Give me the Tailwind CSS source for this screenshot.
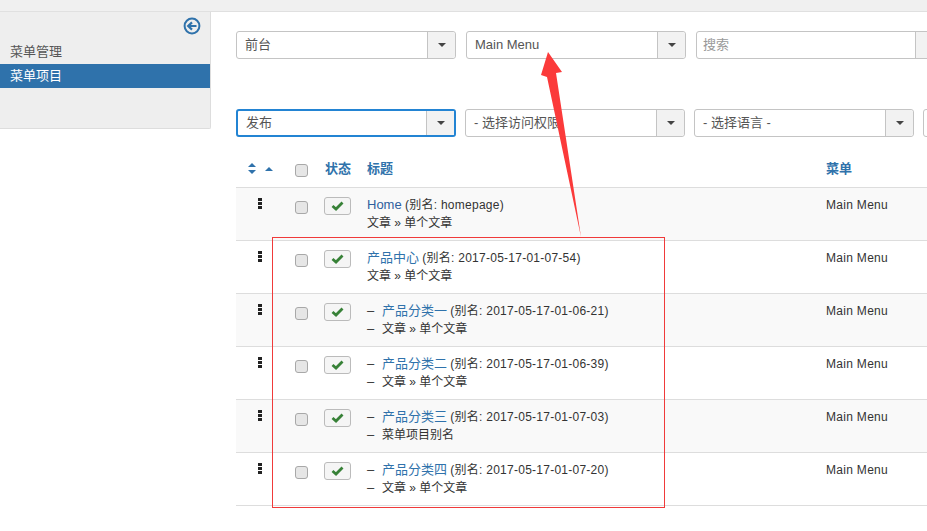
<!DOCTYPE html>
<html lang="zh-CN">
<head>
  <meta charset="UTF-8">
  <title>菜单项目</title>
  <script src="https://cdn.jsdelivr.net/npm/@tailwindcss/browser@4"></script>
</head>
<body class="relative w-[927px] h-[531px] overflow-hidden bg-white text-[13px] text-[#333] font-['Liberation_Sans','Noto_Sans_CJK_SC',sans-serif]">

  <div class="h-3 bg-[#f0f0f0] border-b border-[#e0e0e0]"></div>

  <div class="flex">
    <!-- sidebar -->
    <aside class="w-[211px] h-[117px] shrink-0 bg-[#eeeeee] border-r border-b border-[#dddddd] rounded-br-[2px] pt-[5px]">
      <div class="flex justify-end pr-[9px] h-[23px]">
        <svg class="w-[18px] h-[18px]" viewBox="0 0 18 18" fill="none" stroke="#2f72ab">
          <circle cx="9" cy="9" r="7.4" stroke-width="2"/>
          <path d="M13.5 9H6M9 5.4 5.2 9 9 12.6" stroke-width="2.2"/>
        </svg>
      </div>
      <a class="flex items-center h-6 pl-[10px] text-[#555]">菜单管理</a>
      <a class="flex items-center h-6 pl-[10px] text-white bg-[#2f72ab]">菜单项目</a>
    </aside>

    <main class="pl-[25px] pt-[19px] w-[716px] shrink-0 overflow-hidden">
      <!-- filters -->
      <div class="flex gap-[10px] w-[760px]">
        <div class="flex w-[220px] h-7 border border-[#c4c4c4] rounded-[3px]">
          <span class="flex-1 pl-2 leading-[25px] text-[#555]">前台</span>
          <span class="flex items-center justify-center w-7 bg-[#f2f2f2] border-l border-[#c4c4c4] rounded-r-[3px]"><i class="border-x-[4px] border-t-[4px] border-x-transparent border-t-[#444]"></i></span>
        </div>
        <div class="flex w-[220px] h-7 border border-[#c4c4c4] rounded-[3px]">
          <span class="flex-1 pl-2 leading-[25px] text-[#555]">Main Menu</span>
          <span class="flex items-center justify-center w-7 bg-[#f2f2f2] border-l border-[#c4c4c4] rounded-r-[3px]"><i class="border-x-[4px] border-t-[4px] border-x-transparent border-t-[#444]"></i></span>
        </div>
        <div class="flex w-[260px] h-7 border border-[#c4c4c4] rounded-[3px]">
          <span class="w-[218px] pl-[6px] leading-[25px] text-[#999]">搜索</span>
          <span class="flex-1 bg-[#f2f2f2] border-l border-[#c4c4c4]"></span>
        </div>
      </div>

      <div class="flex gap-[9px] w-[760px] mt-[50px]">
        <div class="flex w-[220px] h-7 border-2 border-[#2384d3] rounded-[3px]">
          <span class="flex-1 pl-2 leading-[23px] text-[#555]">发布</span>
          <span class="flex items-center justify-center w-7 bg-[#f2f2f2] border-l border-[#c4c4c4]"><i class="border-x-[4px] border-t-[4px] border-x-transparent border-t-[#444]"></i></span>
        </div>
        <div class="flex w-[220px] h-7 border border-[#c4c4c4] rounded-[3px]">
          <span class="flex-1 pl-2 leading-[25px] text-[#555]">- 选择访问权限</span>
          <span class="flex items-center justify-center w-7 bg-[#f2f2f2] border-l border-[#c4c4c4] rounded-r-[3px]"><i class="border-x-[4px] border-t-[4px] border-x-transparent border-t-[#444]"></i></span>
        </div>
        <div class="flex w-[220px] h-7 border border-[#c4c4c4] rounded-[3px]">
          <span class="flex-1 pl-2 leading-[25px] text-[#555]">- 选择语言 -</span>
          <span class="flex items-center justify-center w-7 bg-[#f2f2f2] border-l border-[#c4c4c4] rounded-r-[3px]"><i class="border-x-[4px] border-t-[4px] border-x-transparent border-t-[#444]"></i></span>
        </div>
        <div class="w-[60px] h-7 border border-[#c4c4c4] rounded-[3px]"></div>
      </div>

      <!-- table -->
      <div class="mt-[13px]">
        <div class="grid grid-cols-[59px_29px_42px_460px_91px] h-[38px] items-center border-b border-[#dddddd] font-bold text-[#2f72ab]">
          <span class="flex items-center gap-[9px] pl-3">
            <svg class="w-2 h-[11px]" viewBox="0 0 8 11" fill="#2f72ab"><path d="M4 0 8 4H0ZM4 11 0 7H8Z"/></svg>
            <svg class="w-2 h-1" viewBox="0 0 8 4" fill="#2f72ab"><path d="M4 0 8 4H0Z"/></svg>
          </span>
          <input type="checkbox" class="appearance-none w-[13px] h-[13px] mt-[3px] bg-[#e6e6e6] border border-[#a8a8a8] rounded-[3px]">
          <span class="pl-[1px]">状态</span>
          <span class="pl-[1px]">标题</span>
          <span>菜单</span>
        </div>
        <div id="rows"></div>
      </div>
    </main>
  </div>

  <!-- red annotation drawn over the screenshot -->
  <div class="absolute left-[272px] top-[237px] w-[393px] h-[271px] border border-[#f03a3a]"></div>
  <svg class="absolute left-0 top-0 w-[927px] h-[531px] pointer-events-none" viewBox="0 0 927 531">
    <path d="M548 52 562 72 556 73 581 237 547 77 541 75Z" fill="#fb3a3a"/>
  </svg>

  <script>
    const itens = [
      { titulo: 'Home', alias: 'homepage', tipo: '文章 » 单个文章', nivel: 0, cor: 'text-[#2f5f9e]' },
      { titulo: '产品中心', alias: '2017-05-17-01-07-54', tipo: '文章 » 单个文章', nivel: 0, cor: 'text-[#2f72ab]' },
      { titulo: '产品分类一', alias: '2017-05-17-01-06-21', tipo: '文章 » 单个文章', nivel: 1, cor: 'text-[#2f72ab]' },
      { titulo: '产品分类二', alias: '2017-05-17-01-06-39', tipo: '文章 » 单个文章', nivel: 1, cor: 'text-[#2f72ab]' },
      { titulo: '产品分类三', alias: '2017-05-17-01-07-03', tipo: '菜单项目别名', nivel: 1, cor: 'text-[#2f72ab]' },
      { titulo: '产品分类四', alias: '2017-05-17-01-07-20', tipo: '文章 » 单个文章', nivel: 1, cor: 'text-[#2f72ab]' }
    ];

    let html = '';
    itens.forEach((p, i) => {
      const fundo = i % 2 === 0 ? 'bg-[#f9f9f9]' : 'bg-white';
      const traco = p.nivel ? '<span class="w-[15px] text-[13px]">–</span>' : '';
      html += `
        <div class="grid grid-cols-[59px_29px_42px_460px_91px] h-[53px] border-b border-[#dddddd] ${fundo}">
          <span class="flex flex-col gap-px pl-[22px] pt-[10px]"><i class="w-1 h-[3px] bg-[#222]"></i><i class="w-1 h-[3px] bg-[#222]"></i><i class="w-1 h-[3px] bg-[#222]"></i></span>
          <input type="checkbox" class="appearance-none w-[13px] h-[13px] mt-[13px] bg-[#e6e6e6] border border-[#a8a8a8] rounded-[3px]">
          <span class="pt-[9px]"><span class="flex items-center justify-center w-[27px] h-[18px] border border-[#bbb] rounded-[3px] bg-[#f5f5f5]"><svg class="w-[13px] h-[10px]" viewBox="0 0 13 10" fill="none" stroke="#378137" stroke-width="2.8"><path d="M1.5 5 5 8 11.5 1.5"/></svg></span></span>
          <div class="pl-[1px] pt-2 leading-[18px] text-xs">
            <div class="flex">${traco}<span><a class="text-[13px] ${p.cor}">${p.titulo}</a> <span class="tracking-[0.25px]">(别名: ${p.alias})</span></span></div>
            <div class="flex">${traco}<span>${p.tipo}</span></div>
          </div>
          <span class="pt-2 leading-[18px] text-xs tracking-[0.3px]">Main Menu</span>
        </div>`;
    });
    document.getElementById('rows').innerHTML = html;
  </script>

</body>
</html>
